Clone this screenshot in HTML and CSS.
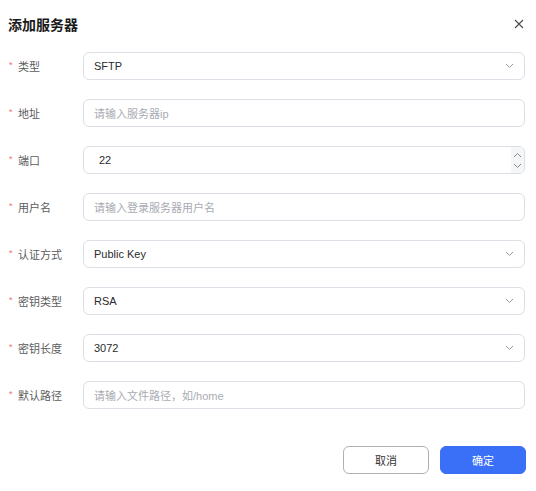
FILE: index.html
```html
<!DOCTYPE html>
<html lang="zh">
<head>
<meta charset="utf-8">
<link rel="stylesheet" href="styles.css">
</head>
<body>
<div class="dialog">
  <div class="header">
    <div class="title">添加服务器</div>
    <svg class="close" width="10" height="10" viewBox="0 0 10 10"><path d="M1 1L9 9M9 1L1 9" stroke="#4a4a4a" stroke-width="1.1" fill="none"/></svg>
  </div>
  <div class="form">
    <div class="row">
      <div class="label"><span class="req">*</span>类型</div>
      <div class="control select"><span class="val">SFTP</span><svg class="chev" width="9" height="6" viewBox="0 0 9 6"><path d="M1 1L4.5 4.5L8 1" stroke="#9a9a9a" stroke-width="1" fill="none"/></svg></div>
    </div>
    <div class="row">
      <div class="label"><span class="req">*</span>地址</div>
      <div class="control"><span class="ph">请输入服务器ip</span></div>
    </div>
    <div class="row">
      <div class="label"><span class="req">*</span>端口</div>
      <div class="control number"><span class="val num">22</span>
        <div class="spin">
          <svg width="9" height="6" viewBox="0 0 9 6"><path d="M1 5L4.5 1.5L8 5" stroke="#8a8a8a" stroke-width="1" fill="none"/></svg>
          <svg width="9" height="6" viewBox="0 0 9 6"><path d="M1 1L4.5 4.5L8 1" stroke="#8a8a8a" stroke-width="1" fill="none"/></svg>
        </div>
      </div>
    </div>
    <div class="row">
      <div class="label"><span class="req">*</span>用户名</div>
      <div class="control"><span class="ph">请输入登录服务器用户名</span></div>
    </div>
    <div class="row">
      <div class="label"><span class="req">*</span>认证方式</div>
      <div class="control select"><span class="val">Public Key</span><svg class="chev" width="9" height="6" viewBox="0 0 9 6"><path d="M1 1L4.5 4.5L8 1" stroke="#9a9a9a" stroke-width="1" fill="none"/></svg></div>
    </div>
    <div class="row">
      <div class="label"><span class="req">*</span>密钥类型</div>
      <div class="control select"><span class="val">RSA</span><svg class="chev" width="9" height="6" viewBox="0 0 9 6"><path d="M1 1L4.5 4.5L8 1" stroke="#9a9a9a" stroke-width="1" fill="none"/></svg></div>
    </div>
    <div class="row">
      <div class="label"><span class="req">*</span>密钥长度</div>
      <div class="control select"><span class="val">3072</span><svg class="chev" width="9" height="6" viewBox="0 0 9 6"><path d="M1 1L4.5 4.5L8 1" stroke="#9a9a9a" stroke-width="1" fill="none"/></svg></div>
    </div>
    <div class="row">
      <div class="label"><span class="req">*</span>默认路径</div>
      <div class="control"><span class="ph">请输入文件路径，如/home</span></div>
    </div>
  </div>
  <div class="footer">
    <button class="btn cancel">取消</button>
    <button class="btn ok">确定</button>
  </div>
</div>
</body>
</html>
```
FILE: styles.css
```css
* { box-sizing: border-box; }
html, body { margin: 0; padding: 0; background: #fff; }
body {
  font-family: "Liberation Sans", "Noto Sans CJK SC", sans-serif;
  font-size: 11px;
  color: #333;
}
.dialog {
  width: 536px;
  height: 491px;
  padding: 14px 11px 0 8px;
}
.header {
  display: flex;
  justify-content: space-between;
  align-items: center;
  height: 20px;
}
.title {
  font-family: "Noto Sans CJK SC", sans-serif;
  font-size: 14px;
  font-weight: 700;
  color: #1a1a1a;
  line-height: 20px;
}
.close { margin-right: 1px; }
.form { margin-top: 18px; }
.row {
  display: flex;
  align-items: center;
  height: 28px;
  margin-bottom: 19px;
}
.label {
  width: 75px;
  padding-left: 1px;
  color: #5c5c5c;
  display: flex;
  align-items: center;
}
.req {
  color: #f56c6c;
  width: 9px;
  font-size: 9px;
  position: relative;
  top: -1px;
}
.control {
  flex: 1;
  height: 28px;
  border: 1px solid #dcdfe6;
  border-radius: 6px;
  display: flex;
  align-items: center;
  padding: 0 10px;
  position: relative;
}
.val { color: #2b2b2b; }
.ph { color: #a8abb2; }
.select { justify-content: space-between; padding-right: 10px; }
.number { padding-left: 15px; }
.spin {
  position: absolute;
  right: 0;
  top: 0;
  bottom: 0;
  width: 13px;
  background: #f5f6f8;
  border-radius: 0 5px 5px 0;
  display: flex;
  flex-direction: column;
  align-items: center;
  justify-content: center;
  gap: 5px;
}
.footer {
  display: flex;
  justify-content: flex-end;
  gap: 11px;
  margin-top: 37px;
  margin-right: -1px;
}
.btn {
  width: 86px;
  height: 28px;
  border-radius: 6px;
  font-family: "Liberation Sans", "Noto Sans CJK SC", sans-serif;
  font-size: 11px;
  cursor: pointer;
}
.cancel {
  background: #fff;
  border: 1px solid #b0b0b0;
  color: #333;
}
.ok {
  background: #3a6ff7;
  border: 1px solid #3a6ff7;
  color: #fff;
}
```
